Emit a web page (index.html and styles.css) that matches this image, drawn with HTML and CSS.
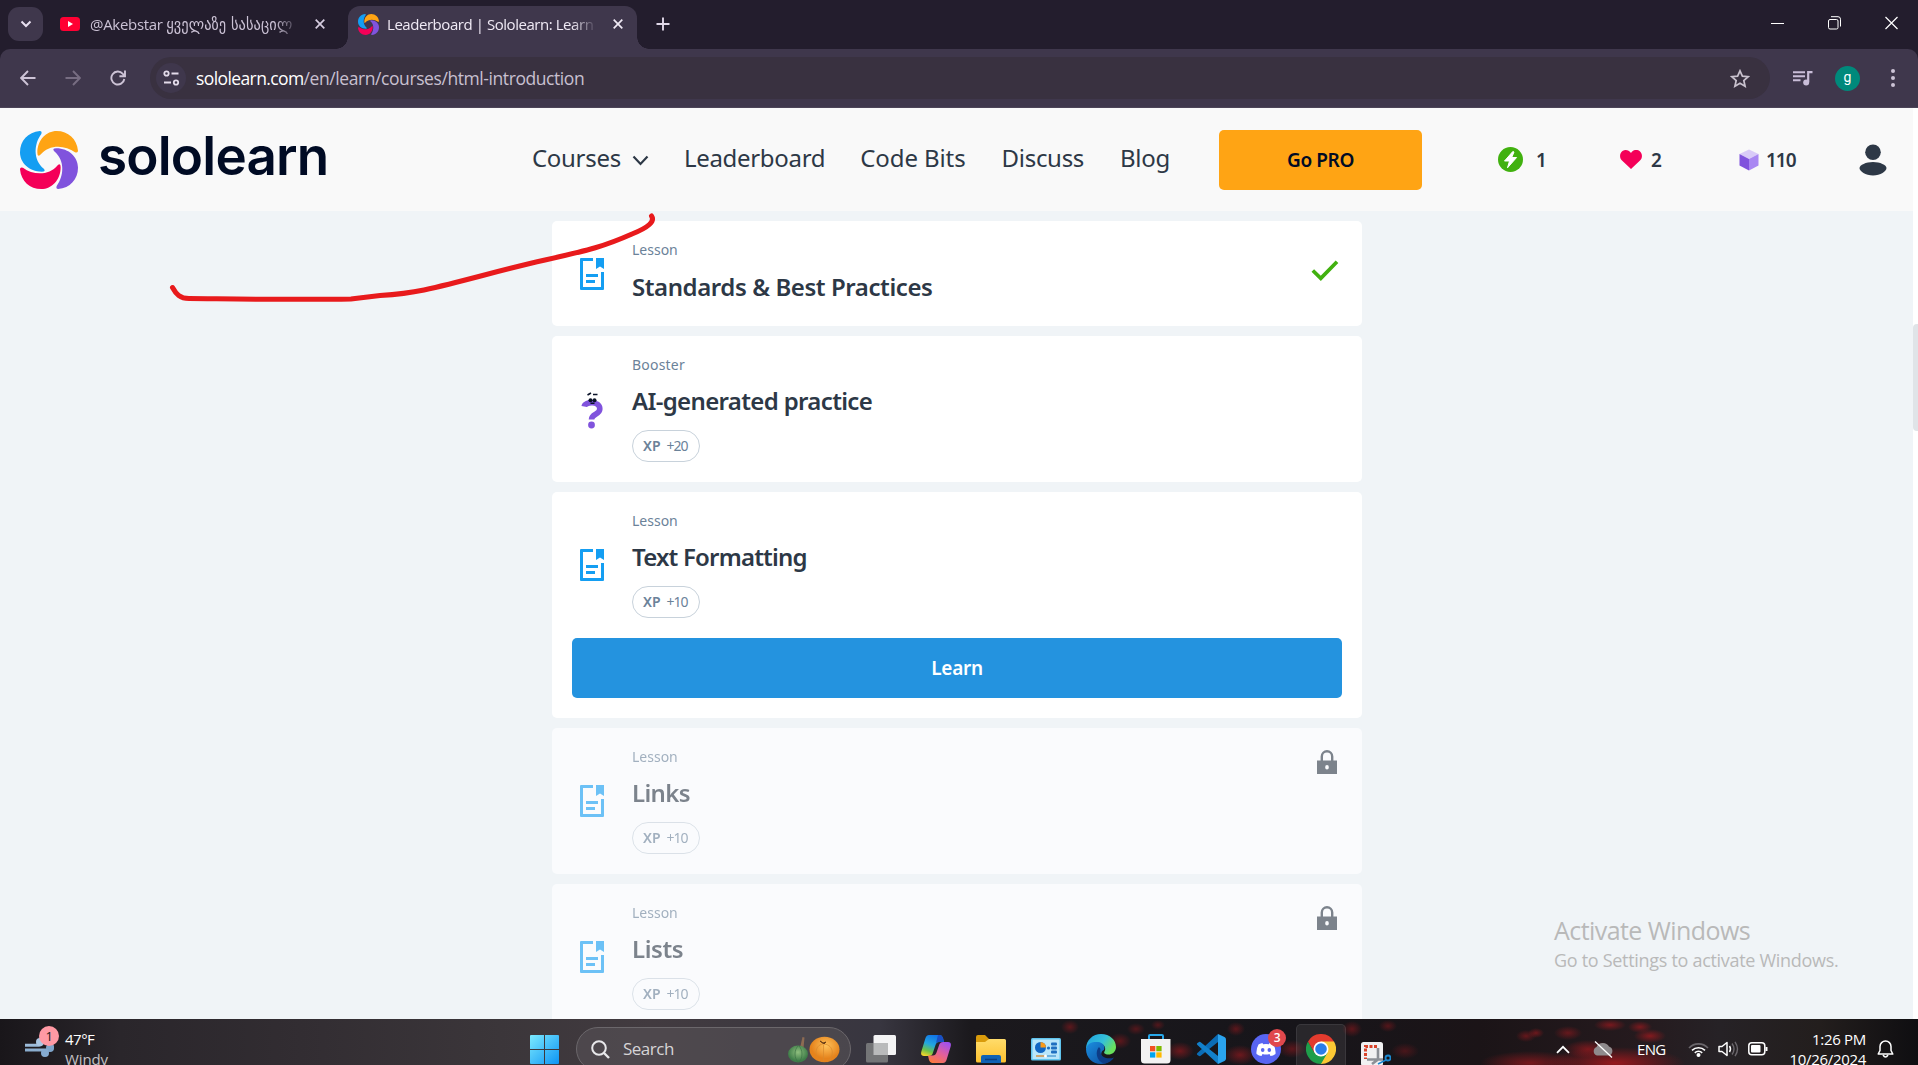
FILE: index.html
```html
<!DOCTYPE html>
<html lang="en">
<head>
<meta charset="utf-8">
<title>Leaderboard | Sololearn: Learn to code</title>
<link rel="stylesheet" href="styles.css">
</head>
<body>
<svg class="sprites" aria-hidden="true">
  <defs>
    <path id="blade" d="M20 0C8 1 0 10 0 21.500C0 32 9 41 22 41Q26.500 41 24 38C13 29 14 13 21.500 3Q22.500 0 20 0Z"/>
    <symbol id="swirl" viewBox="0 0 58.500 58.500">
      <use href="#blade" fill="#149ef2"/>
      <use href="#blade" fill="#ffa414" transform="rotate(90 29.250 29.250)"/>
      <use href="#blade" fill="#8053dd" transform="rotate(180 29.250 29.250)"/>
      <use href="#blade" fill="#f40058" transform="rotate(270 29.250 29.250)"/>
    </symbol>
    <symbol id="doc" viewBox="0 0 24 32">
      <path fill="#149ef2" d="M0 1Q0 0 1 0H13V3H3V29H21V14H24V31Q24 32 23 32H1Q0 32 0 31ZM16 0H24V11L20 8.500L16 11ZM6 16H18V19H6ZM6 22H15V25H6Z"/>
    </symbol>
    <symbol id="lock" viewBox="0 0 20 25">
      <path fill="none" stroke="#2d3846" stroke-width="2.400" d="M4.800 11V6.500A5.200 5.200 0 0 1 15.200 6.500V11"/>
      <path fill="#2d3846" fill-rule="evenodd" d="M0 10.500H20V24H0ZM10 15A1.800 2.200 0 1 0 10 19.500A1.800 2.200 0 1 0 10 15Z"/>
    </symbol>
    <linearGradient id="winblue" x1="0" y1="0" x2="1" y2="1"><stop offset="0" stop-color="#7ceafe"/><stop offset="1" stop-color="#0d94f4"/></linearGradient>
    <linearGradient id="yel" x1="0" y1="0" x2="0" y2="1"><stop offset="0" stop-color="#ffdc6b"/><stop offset="1" stop-color="#fdc12e"/></linearGradient>
    <linearGradient id="edgeTop" x1="0" y1="0" x2="1" y2=".5"><stop offset="0" stop-color="#1e9fe0"/><stop offset=".6" stop-color="#35c1d8"/><stop offset="1" stop-color="#6ae05c"/></linearGradient>
    <linearGradient id="edgeLow" x1="0" y1="0" x2="1" y2="1"><stop offset="0" stop-color="#1b8fe0"/><stop offset="1" stop-color="#0c4a9c"/></linearGradient>
    <linearGradient id="copA" x1=".6" y1="0" x2=".2" y2="1"><stop offset="0" stop-color="#1173e8"/><stop offset=".45" stop-color="#22a6e0"/><stop offset=".75" stop-color="#6cc24a"/><stop offset="1" stop-color="#f5d52b"/></linearGradient>
    <linearGradient id="copB" x1=".8" y1="0" x2=".2" y2="1"><stop offset="0" stop-color="#a050f0"/><stop offset=".5" stop-color="#e2609c"/><stop offset="1" stop-color="#ff7a3c"/></linearGradient>
    <radialGradient id="orangeP" cx=".55" cy=".35"><stop offset="0" stop-color="#ffc25a"/><stop offset="1" stop-color="#e5831c"/></radialGradient>
    <radialGradient id="greenP" cx=".5" cy=".4"><stop offset="0" stop-color="#8fbf7e"/><stop offset="1" stop-color="#3f7d49"/></radialGradient>
    <linearGradient id="wind" gradientUnits="userSpaceOnUse" x1="0" y1="0" x2="0" y2="24"><stop offset="0" stop-color="#b8d2ea"/><stop offset="1" stop-color="#6d95bd"/></linearGradient>
  </defs>
</svg>

<div class="screen">
  <header class="tabstrip">
    <div class="tab-search"><svg width="12" height="8" viewBox="0 0 12 8"><path d="M1.500 1.500L6 6L10.500 1.500" fill="none" stroke="#e8e0f0" stroke-width="2"/></svg></div>
    <div class="tab">
      <svg width="20" height="14" viewBox="0 0 20 14"><rect width="20" height="14" rx="3.500" fill="#f03"/><path d="M8 4L13 7L8 10Z" fill="#fff"/></svg>
      <span class="tab-title"><span class="latin">@Akebstar </span><span class="geo">ყველაზე სასაცილ</span></span>
      <svg width="10" height="10" viewBox="0 0 10 10"><path d="M.7.7L9.300 9.300M9.300.7L.7 9.300" stroke="#d5ccdf" stroke-width="1.700"/></svg>
    </div>
    <div class="tab active">
      <svg width="21" height="21"><use href="#swirl"/></svg>
      <span class="tab-title">Leaderboard | Sololearn: Learn t</span>
      <svg width="10" height="10" viewBox="0 0 10 10"><path d="M.7.7L9.300 9.300M9.300.7L.7 9.300" stroke="#f0eaf5" stroke-width="1.700"/></svg>
    </div>
    <svg class="plus" width="14" height="14" viewBox="0 0 14 14"><path d="M7 .5V13.500M.5 7H13.500" stroke="#e0d8e8" stroke-width="1.900"/></svg>
    <div class="window-controls">
      <svg width="13" height="14" viewBox="0 0 13 14"><path d="M0 7.500H13" stroke="#fff" stroke-width="1"/></svg>
      <svg width="13" height="14" viewBox="0 0 13 14"><rect x=".5" y="3.500" width="9.500" height="9.500" rx="1.500" fill="none" stroke="#fff"/><path d="M3 .7H10Q12.500 .7 12.500 3.200V10.500" fill="none" stroke="#fff"/></svg>
      <svg width="13" height="14" viewBox="0 0 13 14"><path d="M.5 1L12.500 13M12.500 1L.5 13" stroke="#fff" stroke-width="1.200"/></svg>
    </div>
  </header>

  <div class="toolbar">
    <div class="toolbar-bar">
      <div class="nav-icons">
        <svg width="16" height="16" viewBox="0 0 16 16"><path d="M15.500 8H1.500M8 1L1.200 8L8 15" fill="none" stroke="#cdc3d6" stroke-width="1.900"/></svg>
        <svg width="16" height="16" viewBox="0 0 16 16"><path d="M.5 8H14.500M8 1L14.800 8L8 15" fill="none" stroke="#776d82" stroke-width="1.900"/></svg>
        <svg width="16" height="16" viewBox="0 0 16 16"><path d="M14.300 9A6.500 6.500 0 1 1 12.800 3.800L15 6M15 .5V6.200H9.400" fill="none" stroke="#cdc3d6" stroke-width="1.900"/></svg>
      </div>
      <div class="omnibox">
        <div class="site-info"><svg width="17" height="16" viewBox="0 0 17 16"><g fill="none" stroke="#e3dbea" stroke-width="1.800"><circle cx="3.500" cy="3.500" r="2.200"/><path d="M8.500 3.500H15.500M1 12.500H8"/><circle cx="13" cy="12.500" r="2.200"/></g></svg></div>
        <div class="url"><span class="host">sololearn.com</span>/en/learn/courses/html-introduction</div>
        <svg class="star" width="20" height="19" viewBox="0 0 20 19"><path d="M10 1.800L12.400 7.100L18.200 7.700L13.800 11.500L15.100 17.200L10 14.200L4.900 17.200L6.200 11.500L1.800 7.700L7.600 7.100Z" fill="none" stroke="#c9c2ce" stroke-width="1.700"/></svg>
      </div>
      <svg class="queue" width="20" height="15" viewBox="0 0 20 15"><path d="M0 1.200H12M0 5.200H12M0 9.200H7.500" stroke="#c9bdd8" stroke-width="2"/><path d="M15.200 11V1.200H19.500" fill="none" stroke="#c9bdd8" stroke-width="2.200"/><circle cx="13.200" cy="11.500" r="3" fill="#c9bdd8"/></svg>
      <div class="profile">g</div>
      <svg class="menu" width="4" height="18" viewBox="0 0 4 18"><g fill="#cdc3d6"><circle cx="2" cy="2" r="2"/><circle cx="2" cy="9" r="2"/><circle cx="2" cy="16" r="2"/></g></svg>
    </div>
  </div>

  <div class="viewport">
    <div class="page">
      <div class="site-header">
        <svg class="logo" width="58" height="58"><use href="#swirl"/></svg>
        <span class="wordmark">sololearn</span>
        <nav class="site-nav">
          <span class="n1">Courses</span>
          <svg width="17" height="11" viewBox="0 0 17 11"><path d="M1.500 1.500L8.500 9L15.500 1.500" fill="none" stroke="#2d3846" stroke-width="2.200"/></svg>
          <span class="n2">Leaderboard</span>
          <span class="n3">Code Bits</span>
          <span class="n4">Discuss</span>
          <span class="n5">Blog</span>
        </nav>
        <div class="go-pro"><span>Go PRO</span></div>
        <div class="stats">
          <div class="stat s1"><svg width="25" height="25" viewBox="0 0 25 25"><circle cx="12.500" cy="12.500" r="12.500" fill="#41b10f"/><path d="M14.800 4.500L6.500 14H11.500L9.500 20.800L18.600 10.500H13.700L16 5Z" fill="#fff" stroke="#fff" stroke-linejoin="round"/></svg><span>1</span></div>
          <div class="stat s2"><svg width="22" height="19" viewBox="0 0 22 19"><path d="M11 19L2 10.500C-1 7.500-.3 3 2.500 1C5.500-1 9 .2 11 3C13-.2 16.500-1 19.500 1C22.300 3 23 7.500 20 10.500Z" fill="#f40058"/></svg><span>2</span></div>
          <div class="stat s3"><svg width="20" height="22" viewBox="0 0 20 22"><path d="M10 .5L19.500 5L10 10L.5 5Z" fill="#d9cbf8"/><path d="M.5 5L10 10V21.500L.5 16.500Z" fill="#8053dd"/><path d="M19.500 5L10 10V21.500L19.500 16.500Z" fill="#a987f2"/></svg><span>110</span></div>
        </div>
        <svg class="user" width="28" height="32" viewBox="0 0 28 32"><circle cx="14" cy="8.300" r="7.800" fill="#2d3846"/><path d="M14 18C21 18 27.500 21 27.500 24C27.500 27 21.500 31.500 14 31.500S.5 27 .5 24C.5 21 7 18 14 18Z" fill="#2d3846"/></svg>
      </div>
      <main class="lessons">
        <article class="card done">
          <svg class="card-icon" width="24" height="32"><use href="#doc"/></svg>
          <div class="card-body"><span class="kind">Lesson</span><h2 class="wide">Standards &amp; Best Practices</h2></div>
          <svg class="check" width="28" height="21" viewBox="0 0 28 21"><path d="M1.800 10.500L9.800 18.300L26 1.800" fill="none" stroke="#41b10f" stroke-width="3.700"/></svg>
        </article>
        <article class="card">
          <svg class="card-icon quiz" width="24" height="38" viewBox="0 0 24 38"><path d="M4.200 15.500C5 10.500 19.800 9.500 19.800 18C19.800 24 11.500 22.500 11.500 28.500" fill="none" stroke="#8053dd" stroke-width="5.600"/><circle cx="11.500" cy="34" r="3.400" fill="#8053dd"/><circle cx="10.500" cy="9.200" r="2" fill="#0a1228"/><circle cx="14.500" cy="9.200" r="2" fill="#0a1228"/><path d="M7.500 4L11 2M13 3.500H17.500M10.500 12.200H14.500" stroke="#0a1228" stroke-width="1.600" fill="none"/></svg>
          <div class="card-body"><span class="kind booster">Booster</span><h2>AI-generated practice</h2><div class="xp"><b>XP</b><span>+20</span></div></div>
        </article>
        <article class="card">
          <svg class="card-icon" width="24" height="32"><use href="#doc"/></svg>
          <div class="card-body"><span class="kind">Lesson</span><h2 class="tight">Text Formatting</h2><div class="xp"><b>XP</b><span>+10</span></div></div>
          <div class="learn"><span>Learn</span></div>
        </article>
        <article class="card locked">
          <svg class="card-icon" width="24" height="32"><use href="#doc"/></svg>
          <div class="card-body"><span class="kind">Lesson</span><h2>Links</h2><div class="xp"><b>XP</b><span>+10</span></div></div>
          <svg class="lock" width="20" height="25"><use href="#lock"/></svg>
        </article>
        <article class="card locked">
          <svg class="card-icon" width="24" height="32"><use href="#doc"/></svg>
          <div class="card-body"><span class="kind">Lesson</span><h2 class="wide">Lists</h2><div class="xp"><b>XP</b><span>+10</span></div></div>
          <svg class="lock" width="20" height="25"><use href="#lock"/></svg>
        </article>
      </main>
    </div>
    <div class="scrollbar"><div class="thumb"></div></div>
  </div>

  <footer class="taskbar">
    <div class="weather">
      <div class="weather-icon">
        <svg width="30" height="24" viewBox="0 0 30 24"><g fill="none" stroke="url(#wind)" stroke-width="3"><path d="M0 9.200H14C19 9 18 2.500 14 3" /><path d="M0 14H24C29 13.500 28 8 24.500 9M17 14C22 15 21.500 20 18 18.500"/></g><circle cx="15" cy="6" r="4" fill="#a9c6e2"/><circle cx="25" cy="12" r="4" fill="#7ea4ca"/><circle cx="20" cy="17" r="4" fill="#86abd0"/></svg>
        <span class="badge pink">1</span>
      </div>
      <div class="weather-text"><span class="temp">47°F</span><span class="cond">Windy</span></div>
    </div>
    <div class="apps">
      <svg width="29" height="29" viewBox="0 0 29 29"><path fill="url(#winblue)" d="M0 1Q0 0 1 0H14V14H0ZM15 0H28Q29 0 29 1V14H15ZM0 15H14V29H1Q0 29 0 28ZM15 15H29V28Q29 29 28 29H15Z"/></svg>
      <div class="search">
        <svg width="19" height="19" viewBox="0 0 19 19"><circle cx="8" cy="8" r="6.800" fill="none" stroke="#e8e8ea" stroke-width="2"/><path d="M13 13L18 18" stroke="#e8e8ea" stroke-width="2.400"/></svg>
        <span>Search</span>
        <svg class="pumpkins" width="52" height="27" viewBox="0 0 52 27"><path d="M12 12L14.500 1L16.500 1.500L15.500 12Z" fill="#8d6b52"/><ellipse cx="10" cy="18" rx="10" ry="8.500" fill="url(#greenP)"/><path d="M10 10C6 14 6 22 10 26M11 10C15 14 15 22 11 26" stroke="#3c7345" stroke-width=".7" fill="none"/><ellipse cx="36.500" cy="13.500" rx="15" ry="12.800" fill="url(#orangeP)"/><path d="M35 8C26 9 26 22 34 25.500M36 8C47 9 46 22 39 26M35.500 9V26" stroke="#d98a2c" stroke-width=".7" fill="none"/><path d="M32 5L36 8L38 6L35 7Z" fill="#6b3f18" stroke="#6b3f18"/></svg>
      </div>
      <svg width="30" height="28" viewBox="0 0 30 28"><rect x="7.500" y="0" width="22.500" height="20" rx="1.500" fill="#f4f4f5"/><rect x="0" y="8" width="22" height="19.500" rx="1.500" fill="#747577"/><rect x="7.500" y="8" width="14.500" height="12" fill="#b9babb"/></svg>
      <svg width="30" height="28" viewBox="0 0 30 28"><path d="M8 0H19Q21 0 22 3L23 7H18Q15.500 7 14.500 10L11.500 19Q10.500 21 8 21H3Q-1 21 .5 16L4.500 3Q5.500 0 8 0Z" fill="url(#copA)"/><path d="M22 28H11Q9 28 8 25L7 20.500H12Q14.500 20.500 15.500 17.500L18.500 9Q19.500 7 22 7H27Q31 7 29.500 12L25.500 25Q24.500 28 22 28Z" fill="url(#copB)"/><path d="M17 0H19Q21 0 22 3L23 7H18Q15.800 7 15 8Z" fill="#1a4fc4"/></svg>
      <svg width="30" height="28" viewBox="0 0 30 28"><path d="M0 2Q0 0 2 0H9L13 4H28V12H0Z" fill="#d99b0b"/><path d="M0 7H9L13 4H28.500Q30 4 30 5.500V26Q30 27.500 28.500 27.500H1.500Q0 27.500 0 26Z" fill="url(#yel)"/><path d="M5 28V22Q5 20 7 20H23Q25 20 25 22V28Z" fill="#0f62b5"/><path d="M9 24.500H21" stroke="#083f82" stroke-width="1.500"/></svg>
      <svg width="30" height="23" viewBox="0 0 30 23"><rect width="30" height="22.500" rx="1.500" fill="#60c4ee"/><rect x="1.500" y="1.500" width="27" height="19.500" fill="#b9e6fa"/><circle cx="9.500" cy="9.500" r="5.500" fill="#1267c4"/><path d="M9.500 9.500V4A5.500 5.500 0 0 1 15 9.500Z" fill="#fb9a17"/><g fill="#1f6fc0"><rect x="20" y="4.500" width="6" height="3" rx="1"/><rect x="20" y="8.500" width="6" height="3" rx="1"/><rect x="20" y="12.500" width="6" height="3" rx="1"/><circle cx="17.500" cy="10" r="1.600"/></g><path d="M5 18H14" stroke="#d97d18" stroke-width="1.200"/><path d="M14 18H25" stroke="#3d8fcc" stroke-width="1.200"/><circle cx="14.500" cy="18" r="1.500" fill="#fff"/></svg>
      <svg width="30" height="30" viewBox="0 0 30 30"><path d="M0 15C0 6 7 0 15 0C24 0 30 6 30 13C30 18 26 20.500 22.500 20.500C18.500 20.500 17.500 18.500 18.500 17.500C20 15.500 19.500 9.500 13 9.500C7 9.500 2 12 0 15Z" fill="url(#edgeTop)"/><path d="M0 15C1 9 7 7.500 12 8C17 8.500 19.500 12 18 16C14 17 13 26.500 24.500 26.500C22 29 19 30 15 30C7 30 0 24 0 15Z" fill="url(#edgeLow)"/><path d="M13 13C9 17 10 27 18 29.500C23 29 26 26.500 28 23.500C21 26 13 23 14.500 15Z" fill="#0d3c86"/></svg>
      <svg width="30" height="30" viewBox="0 0 30 30"><path d="M8 6V2Q8 1 9 1H21Q22 1 22 2V6" fill="none" stroke="#28a8ea" stroke-width="2"/><path d="M0 5H29.500V26Q29.500 29.500 26 29.500H3.500Q0 29.500 0 26Z" fill="#f2f2f2"/><path d="M9 12H14.300V17.300H9Z" fill="#f25022"/><path d="M15.300 12H20.600V17.300H15.300Z" fill="#7fba00"/><path d="M9 18.300H14.300V23.600H9Z" fill="#00a4ef"/><path d="M15.300 18.300H20.600V23.600H15.300Z" fill="#ffb900"/></svg>
      <svg width="30" height="30" viewBox="0 0 30 30"><path d="M22 0L2 18.500Q0 20 1.500 21L3 22Q4 22.500 5 21.500L22 8Z" fill="#0b6cb5"/><path d="M22 30L2 11.500Q0 10 1.500 9L3 8Q4 7.500 5 8.500L22 22Z" fill="#1280cb"/><path d="M22 0L28.500 3Q30 3.700 30 5.500V24.500Q30 26.300 28.500 27L22 30Z" fill="#2aa3ee"/></svg>
      <div class="discord">
        <svg width="30" height="30" viewBox="0 0 30 30"><circle cx="15" cy="15" r="15" fill="#5865f2"/><path d="M11.500 9Q8.500 9.500 7.500 10.500Q5 15 5.500 20Q8 22 10.500 22L11.500 20Q15 21 18.500 20L19.500 22Q22 22 24.500 20Q25 15 22.500 10.500Q21 9.500 18.500 9L18 10.200Q15 9.700 12 10.200Z" fill="#fff"/><ellipse cx="11.700" cy="16" rx="1.800" ry="2" fill="#5865f2"/><ellipse cx="18.300" cy="16" rx="1.800" ry="2" fill="#5865f2"/></svg>
        <span class="badge red">3</span>
      </div>
      <div class="app-active"><svg width="30" height="30" viewBox="0 0 30 30"><path d="M15 15L2 7.500A15 15 0 0 1 28 7.500Z" fill="#e33b2e"/><path d="M15 15V7.500H28A15 15 0 0 1 15 30Z" fill="#fcc934"/><path d="M15 15L21.500 18.700L15 30A15 15 0 0 1 2 7.500L8.500 18.700Z" fill="#1e9e4a"/><path d="M2 7.500H15V15L8.500 18.700Z" fill="#e33b2e"/><circle cx="15" cy="15" r="7.500" fill="#fff"/><circle cx="15" cy="15" r="5.800" fill="#2b7de9"/></svg></div>
      <svg class="snip" width="30" height="24" viewBox="0 0 30 24"><rect width="22" height="24" rx="2.500" fill="#f1f1f2"/><path d="M16 4.500H4.500V17" fill="none" stroke="#d9432a" stroke-width="3" stroke-dasharray="3 1.500"/><path d="M17 6V18M6 17.500H22M11 22L17 17.500" stroke="#8c9096" stroke-width="2.600" fill="none"/><circle cx="27" cy="16" r="2.500" fill="none" stroke="#1a87cf" stroke-width="1.800"/><path d="M17 22L25 18" stroke="#1a87cf" stroke-width="1.800"/></svg>
    </div>
    <div class="tray">
      <svg width="14" height="9" viewBox="0 0 14 9"><path d="M1 7.800L7 1.800L13 7.800" fill="none" stroke="#fff" stroke-width="1.800"/></svg>
      <svg class="cloud" width="22" height="17" viewBox="0 0 22 17"><path d="M5 14.500A4.500 4.500 0 0 1 4.500 6A7 7 0 0 1 17 5.500A4.800 4.800 0 0 1 17.500 14.500Z" fill="#8f8b8d"/><path d="M3 .5L20 16.500" stroke="#fff" stroke-width="1.300"/></svg>
      <span class="lang">ENG</span>
      <svg class="wifi" width="21" height="15" viewBox="0 0 21 15"><g fill="none" stroke="#fff" stroke-width="1.600"><path d="M1 6A13 13 0 0 1 20 6" stroke="#6b676c"/><path d="M4 8.300A9.500 9.500 0 0 1 17 8.300"/><path d="M6.800 10.800A5.500 5.500 0 0 1 14.200 10.800"/></g><circle cx="10.500" cy="13" r="2" fill="#fff"/></svg>
      <svg class="vol" width="21" height="16" viewBox="0 0 21 16"><path d="M1 5.500H4L9 1.500V14.500L4 10.500H1Z" fill="none" stroke="#fff" stroke-width="1.500" stroke-linejoin="round"/><path d="M11.500 5Q13.500 8 11.500 11" fill="none" stroke="#fff" stroke-width="1.500"/><path d="M14 2.500Q18 8 14 13.500M17 .8Q22 8 17 15.200" fill="none" stroke="#6b676c" stroke-width="1.400"/></svg>
      <svg class="batt" width="20" height="14" viewBox="0 0 20 14"><rect x=".8" y=".8" width="16" height="12" rx="3" fill="none" stroke="#fff" stroke-width="1.500"/><rect x="3" y="3" width="9.500" height="7.600" rx="1" fill="#fff"/><path d="M18.500 5V9" stroke="#fff" stroke-width="2"/></svg>
      <div class="clock"><span class="time">1:26 PM</span><span class="date">10/26/2024</span></div>
      <svg class="bell" width="17" height="18" viewBox="0 0 17 18"><path d="M8.500 1A5.500 5.500 0 0 1 14 6.500V10.500L15.800 14H1.200L3 10.500V6.500A5.500 5.500 0 0 1 8.500 1Z" fill="none" stroke="#fff" stroke-width="1.500" stroke-linejoin="round"/><path d="M6 15Q8.500 19 11 15" fill="none" stroke="#fff" stroke-width="1.500"/></svg>
    </div>
  </footer>

  <div class="watermark"><span class="w1">Activate Windows</span><span class="w2">Go to Settings to activate Windows.</span></div>
  <svg class="pen" width="500" height="100" viewBox="165 208 500 100"><path d="M172.500 287.500C176 294 180 298.500 189 298.500C240 299 300 300 351 299L380 295.500Q405 294 424 290C465 281 500 270 545 260C590 250 605 246 632 234Q657 224 651.500 216" fill="none" stroke="#e81a1c" stroke-width="5" stroke-linecap="round"/></svg>
</div>
</body>
</html>
```
FILE: styles.css
```css
* { box-sizing: border-box; }
body { margin: 0; overflow: hidden; font-family: "Noto Sans", sans-serif; }
svg { display: block; flex: none; }
.sprites { position: absolute; width: 0; height: 0; }
.screen { position: relative; width: 1918px; height: 1065px; overflow: hidden; display: flex; flex-direction: column; background: #f0f4f7; }
.screen span { white-space: pre; }

/* browser chrome */
.tabstrip { height: 49px; flex: none; background: #231d2d; display: flex; padding: 0 20px 0 8px; align-items: flex-start; font: 15px "Open Sans", sans-serif; }
.tab-search { width: 35px; height: 34px; margin-top: 7px; border-radius: 11px; background: #3f374c; display: flex; align-items: center; justify-content: center; }
.tab { width: 289px; height: 43px; margin-top: 6px; padding: 0 14px 7px 10px; display: flex; align-items: center; color: #cbc2d5; position: relative; }
.tab:not(.active) { margin-left: 7px; padding-left: 10px; width: 298px; padding-right: 23px; }
.tab-title { width: 210px; margin-left: 10px; overflow: hidden; white-space: nowrap; mask-image: linear-gradient(90deg, #000 88%, transparent); line-height: 24px; }
.tab svg:last-child { margin-left: auto; }
.tab .latin { letter-spacing: -.3px; }
.geo { font: 16px/20px "DejaVu Sans Condensed", "DejaVu Sans", sans-serif; letter-spacing: .1px; }
.active { background: #3f374c; border-radius: 12px 12px 0 0; color: #f0eaf5; letter-spacing: -.45px; }
.active .tab-title { margin-left: 8px; }
.active::before, .active::after { content: ""; position: absolute; bottom: 0; width: 12px; height: 12px; }
.active::before { left: -12px; background: radial-gradient(circle at 0 0, transparent 11.500px, #3f374c 12px); }
.active::after { right: -12px; background: radial-gradient(circle at 100% 0, transparent 11.500px, #3f374c 12px); }
.plus { margin: 17px 0 0 19px; }
.window-controls { margin: 16px 0 0 auto; display: flex; gap: 44px; }
.toolbar { height: 59px; flex: none; background: #231d2d; }
.toolbar-bar { height: 59px; background: #3f374c; border-bottom: 1px solid #4c4458; border-radius: 10px 10px 0 0; display: flex; align-items: center; padding-left: 20px; }
.nav-icons { display: flex; gap: 29px; width: 130px; }
.omnibox { width: 1620px; height: 42px; border-radius: 21px; background: #393140; display: flex; align-items: center; padding: 0 20px 0 6px; }
.site-info { width: 30px; height: 30px; border-radius: 50%; background: #3f374c; display: flex; align-items: center; justify-content: center; }
.url { margin-left: 10px; font: 17.500px/30px "Open Sans", sans-serif; color: #c8c0d0; letter-spacing: -.42px; }
.host { color: #fff; letter-spacing: -.6px; }
.star { margin-left: auto; }
.queue { margin-left: 23px; }
.profile { margin-left: 22px; width: 25px; height: 25px; border-radius: 50%; background: #00897b; color: #fff; font: 14px/23px "Roboto", sans-serif; text-align: center; }
.menu { margin-left: 31px; }

/* site header */
.viewport { height: 911px; flex: none; display: flex; overflow: hidden; }
.page { width: 1913px; }
.scrollbar { width: 5px; background: #fff; padding-top: 216px; }
.thumb { height: 107px; background: #e0e4e8; border-radius: 4px 0 0 4px; }
.site-header { height: 103px; background: #f9f9f9; display: flex; align-items: center; padding: 0 26px 0 20px; color: #2d3846; }
.logo { margin-top: 1px; }
.wordmark { width: 434px; margin: 0 0 8px 20px; font: 600 53px/60px "Inter", sans-serif; letter-spacing: -.8px; color: #000b24; }
.site-nav { display: flex; align-items: center; width: 687px; margin-bottom: 3px; font-size: 24px; line-height: 32px; letter-spacing: -.3px; }
.site-nav svg { margin: 5px 35px 0 11px; }
.site-nav .n2 { margin-right: 35px; }
.site-nav .n3 { margin-right: 36px; letter-spacing: -.1px; }
.site-nav .n4 { margin-right: 36px; }
.go-pro { width: 203px; height: 60px; background: #ffa414; border-radius: 5px; color: #000b24; font-size: 19px; font-weight: 600; letter-spacing: -.4px; display: flex; align-items: center; justify-content: center; }
.stats { display: flex; margin-left: 76px; width: 361px; }
.stat { display: flex; align-items: center; gap: 13px; font-size: 19px; font-weight: 600; line-height: 24px; }
.s1 { width: 122px; }
.s2 { width: 119px; gap: 9px; }
.s3 { gap: 7px; letter-spacing: -1px; }

/* lesson cards */
.lessons { width: 810px; margin: 10px auto 0 552px; display: flex; flex-direction: column; gap: 10px; }
.card { background: #fff; border-radius: 5px; padding: 20px; height: 146px; display: flex; flex-wrap: wrap; align-items: flex-start; align-content: flex-start; color: #2d3846; flex: none; }
.card.done { height: 105px; }
.card:has(.learn) { height: 226px; }
.card.locked { background: #fafbfd; }
.locked .card-icon, .locked .card-body, .locked .lock { opacity: .61; }
.card-icon { margin: 37px 28px 0 8px; }
.done .card-icon { margin-top: 17px; }
.card-icon.quiz { margin-top: 35px; }
.card-body { flex: 1; }
.kind { display: block; font-size: 14px; line-height: 18px; color: #6b8299; }
.booster { letter-spacing: .2px; }
.card h2 { margin: 12px 0 0; font-size: 24px; line-height: 30px; font-weight: 600; letter-spacing: -.65px; white-space: nowrap; }
.card.done h2 { margin-top: 13px; }
.card h2.wide { letter-spacing: -.42px; }
.card h2.tight { letter-spacing: -.8px; }
.xp { width: fit-content; margin-top: 14px; display: flex; align-items: center; gap: 6px; height: 32px; border: 1px solid #c8d2db; border-radius: 16px; padding: 0 11px 0 10px; font-size: 14px; line-height: 18px; color: #6b8299; }
.xp b { font-weight: 600; }
.xp span { letter-spacing: -1px; }
.check { margin: 19px 3px 0 0; }
.lock { margin: 2px 5px 0 0; }
.learn { width: 770px; height: 60px; margin-top: 20px; border-radius: 5px; background: #2493df; color: #fff; font-size: 19px; font-weight: 600; letter-spacing: -.3px; display: flex; align-items: center; justify-content: center; }

/* taskbar */
.taskbar { height: 60px; flex: none; display: flex; align-items: center; position: relative; font: 15px/20px "Open Sans", sans-serif; letter-spacing: -.3px; color: #fff;
  background:
    radial-gradient(ellipse 9px 7px at 1070px 8px, #8a171c99, transparent), radial-gradient(ellipse 11px 8px at 1120px 22px, #8a171c99, transparent),
    radial-gradient(ellipse 9px 6px at 1136px 10px, #7a171c99, transparent), radial-gradient(ellipse 7px 5px at 1158px 6px, #7a171c99, transparent),
    radial-gradient(ellipse 14px 9px at 1180px 32px, #a3191e99, transparent), radial-gradient(ellipse 9px 7px at 1236px 10px, #8a171c99, transparent),
    radial-gradient(ellipse 16px 10px at 1240px 36px, #a3191e99, transparent), radial-gradient(ellipse 14px 9px at 1292px 30px, #8a171c99, transparent),
    radial-gradient(ellipse 10px 8px at 1352px 10px, #8a171c99, transparent), radial-gradient(ellipse 9px 6px at 1388px 7px, #8a171c88, transparent),
    radial-gradient(ellipse 14px 8px at 1405px 32px, #6a171c99, transparent), radial-gradient(ellipse 8px 5px at 1536px 14px, #a3191e99, transparent),
    radial-gradient(ellipse 10px 6px at 1526px 17px, #a3191e88, transparent), radial-gradient(ellipse 14px 7px at 1568px 14px, #a3191e88, transparent),
    radial-gradient(ellipse 16px 6px at 1610px 6px, #a3191eaa, transparent), radial-gradient(ellipse 12px 6px at 1640px 8px, #a3191eaa, transparent), radial-gradient(ellipse 16px 7px at 1650px 17px, #b3191eaa, transparent),
    radial-gradient(ellipse 24px 9px at 1588px 30px, #b3191e99, transparent), radial-gradient(ellipse 70px 16px at 1615px 44px, #b3191ecc, transparent), radial-gradient(ellipse 50px 12px at 1530px 44px, #a3191eaa, transparent),
    linear-gradient(90deg, #19161a 0, #2a262b 120px, #322d32 300px, #3b363a 500px, #423b40 650px, #383640 880px, #1b191d 970px, #17151a 1300px, #1b1417 1480px, #251a1e 1640px, #262226 1720px, #231e1d 1820px, #0f0e11 1918px); }
.weather { display: flex; width: 530px; padding-left: 25px; }
.weather-icon { width: 30px; height: 24px; position: relative; margin-top: 7px; }
.badge { position: absolute; border-radius: 50%; text-align: center; }
.pink { left: 14px; top: -10px; width: 20px; height: 20px; background: #ff99a4; color: #1b1b1b; font-size: 13px; }
.weather-text { display: flex; flex-direction: column; margin-left: 10px; }
.temp { letter-spacing: -.5px; }
.cond { color: #c4c1c4; letter-spacing: -.1px; }
.apps { display: flex; align-items: center; gap: 25px; }
.apps > :first-child { margin-right: -8px; }
.search { width: 275px; height: 44px; margin-right: -10px; border-radius: 22px; background: #56525699; border: 1px solid #6b676b; display: flex; align-items: center; padding: 0 10px 0 14px; font-size: 17px; letter-spacing: -.5px; color: #d6d4d6; }
.search span { margin-left: 13px; }
.pumpkins { margin-left: auto; }
.discord { position: relative; }
.red { left: 17px; top: -5px; width: 18px; height: 18px; background: #e0484d; font: 600 12px/18px "Open Sans", sans-serif; }
.app-active { width: 50px; height: 50px; margin: 0 -10px; border-radius: 5px; background: #ffffff14; border: 1px solid #ffffff14; display: flex; align-items: center; justify-content: center; }
.snip { margin-top: 10px; }
.tray { display: flex; align-items: center; margin-left: 165px; }
.cloud { margin-left: 22px; }
.lang { margin-left: 23px; width: 51px; letter-spacing: -.7px; }
.vol { margin-left: 9px; }
.batt { margin-left: 9px; }
.clock { display: flex; flex-direction: column; align-items: flex-end; width: 98px; }
.bell { margin-left: 11px; }

/* desktop overlays */
.watermark { position: absolute; left: 1554px; top: 912px; display: flex; flex-direction: column; font-family: "Open Sans", sans-serif; color: #b9b9b9; }
.w1 { font-size: 25px; line-height: 36px; letter-spacing: -.57px; }
.w2 { font-size: 18px; line-height: 24px; letter-spacing: -.3px; }
.pen { position: absolute; left: 165px; top: 208px; }
```
